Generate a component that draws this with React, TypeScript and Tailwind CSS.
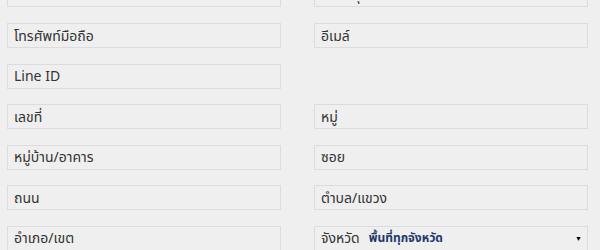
import React from "react";

type Field = { label: string } | null;

const rows: [Field, Field][] = [
  [{ label: "ชื่อ" }, { label: "นามสกุล" }],
  [{ label: "โทรศัพท์มือถือ" }, { label: "อีเมล์" }],
  [{ label: "Line ID" }, null],
  [{ label: "เลขที่" }, { label: "หมู่" }],
  [{ label: "หมู่บ้าน/อาคาร" }, { label: "ซอย" }],
  [{ label: "ถนน" }, { label: "ตำบล/แขวง" }],
];

const TextBox: React.FC<{ label: string }> = ({ label }) => (
  <div className="h-[25px] border border-[#dcdcdc] bg-[#eeefee] px-[6px] flex items-center">
    <span className="text-[14px] leading-none text-[#333]">{label}</span>
  </div>
);

const App: React.FC = () => {
  return (
    <div
      className="w-[600px] h-[250px] overflow-hidden bg-[#eeefee]"
      style={{ fontFamily: '"Noto Sans", "Noto Sans Thai", Tahoma, sans-serif' }}
    >
      <div className="mt-[-17.6px] grid grid-cols-[274px_274px] gap-x-[33px] gap-y-[15.6px] pl-[7px]">
        {rows.map(([left, right], i) => (
          <React.Fragment key={i}>
            {left ? <TextBox label={left.label} /> : <div className="h-[25px]" />}
            {right ? <TextBox label={right.label} /> : <div className="h-[25px]" />}
          </React.Fragment>
        ))}
        <TextBox label="อำเภอ/เขต" />
        {/* province select */}
        <div className="h-[25px] border border-[#dcdcdc] bg-[#eeefee] pl-[6px] pr-[5px] flex items-center">
          <span className="text-[14px] leading-none text-[#333]">จังหวัด</span>
          <span className="ml-[9px] text-[12px] leading-none font-bold text-[#1d3a6b]">
            พื้นที่ทุกจังหวัด
          </span>
          <span className="ml-auto text-[7px] leading-none text-black">▼</span>
        </div>
      </div>
    </div>
  );
};

export default App;
